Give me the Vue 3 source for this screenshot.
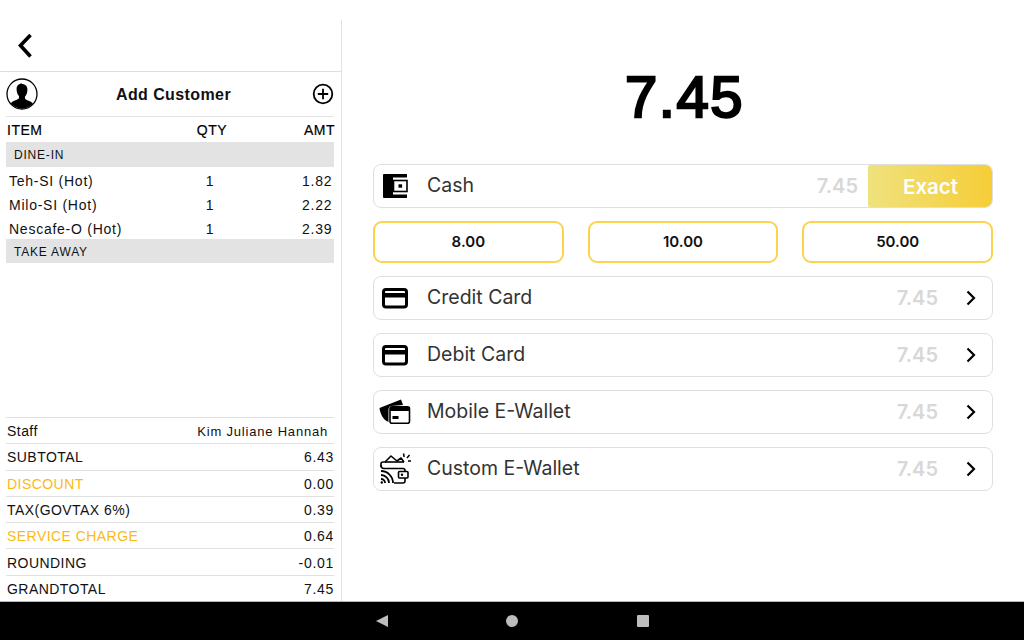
<template>
  <div class="screen">
    <div class="main">
      <aside class="left">
        <div class="back-row">
          <svg class="back-icon" width="20" height="28" viewBox="0 0 20 28">
            <path d="M16.500 3 L6.500 13.500 L16.500 24.500" fill="none" stroke="#000" stroke-width="3.600" />
          </svg>
        </div>
        <div class="customer-row">
          <svg width="32" height="32" viewBox="0 0 32 32">
            <defs>
              <clipPath id="avatarClip"><circle cx="16" cy="16" r="14.600" /></clipPath>
            </defs>
            <circle cx="16" cy="16" r="15" fill="#fff" stroke="#000" stroke-width="1.300" />
            <g clip-path="url(#avatarClip)">
              <path d="M16 5.500c-3.600 0-5.600 2.600-5.400 6 .1 2.600.9 5 2.300 6.500.4.9.2 2-.4 2.700-1.800 1.400-5.600 1.900-7.500 4.300L4 32h24l-1-6.500c-1.900-2.400-5.700-2.900-7.500-4.300-.6-.7-.8-1.800-.4-2.700 1.400-1.500 2.200-3.900 2.300-6.500.2-3.400-1.800-6-5.400-6z" fill="#000" />
            </g>
          </svg>
          <span class="customer-label">Add Customer</span>
          <svg width="22" height="22" viewBox="0 0 22 22">
            <circle cx="11" cy="11" r="9.300" fill="none" stroke="#000" stroke-width="1.800" />
            <path d="M11 5.800v10.400M5.800 11h10.400" stroke="#000" stroke-width="1.800" />
          </svg>
        </div>
        <div class="order-head">
          <span class="c-name">ITEM</span>
          <span class="c-qty">QTY</span>
          <span class="c-amt">AMT</span>
        </div>
        <div class="group dine">DINE-IN</div>
        <div v-for="item in items" :key="item.name" class="order-row">
          <span class="c-name">{{ item.name }}</span>
          <span class="c-qty">1</span>
          <span class="c-amt">{{ item.amt }}</span>
        </div>
        <div class="group take">TAKE AWAY</div>
        <div class="spacer"></div>
        <div class="summary">
          <div class="sum-row staff">
            <span>Staff</span>
            <span class="staff-name">Kim Juliane Hannah</span>
          </div>
          <div v-for="row in summary" :key="row.label" class="sum-row">
            <span :class="{ accent: row.accent }">{{ row.label }}</span>
            <span class="sum-val">{{ row.value }}</span>
          </div>
        </div>
      </aside>

      <section class="right">
        <div class="total">7.45</div>

        <div class="pay-row cash">
          <svg class="pay-icon" width="28" height="26" viewBox="0 0 28 26">
            <path d="M3 1H26V4.500H12V21.500H26V25H3a1 1 0 0 1-1-1V2a1 1 0 0 1 1-1z" fill="#000" />
            <rect x="12.500" y="7.500" width="13.500" height="11" fill="#fff" stroke="#000" stroke-width="1.600" />
            <rect x="17.500" y="11.300" width="3.600" height="3.400" fill="#000" />
          </svg>
          <span class="pay-label">Cash</span>
          <span class="pay-amt">7.45</span>
          <span class="exact">Exact</span>
        </div>

        <div class="quick">
          <button v-for="q in quick" :key="q" class="quick-btn">{{ q }}</button>
        </div>

        <div v-for="m in methods" :key="m.label" class="pay-row">
          <svg v-if="m.icon === 'card'" class="pay-icon" width="28" height="26" viewBox="0 0 28 26">
            <rect x="2.500" y="4.500" width="23" height="17.500" rx="2.500" fill="none" stroke="#000" stroke-width="3" />
            <rect x="2" y="8" width="24" height="4.500" fill="#000" />
          </svg>
          <svg v-else-if="m.icon === 'mobile'" class="pay-icon mobile" width="34" height="28" viewBox="0 0 34 28">
            <path d="M1.500 10 23 1.500 25 7 13 8q-2.500.5-2.500 3v13C5 22 2 15 1.500 10z" fill="#000" />
            <rect x="12" y="8.800" width="19.500" height="16.400" rx="2" fill="#fff" stroke="#000" stroke-width="1.600" />
            <rect x="12" y="9" width="19.500" height="4" fill="#000" />
            <rect x="14.500" y="18" width="6" height="3" fill="#000" />
          </svg>
          <svg v-else class="pay-icon custom" width="34" height="34" viewBox="0 0 34 34">
            <path d="M2 15v-3q0-2 2-2h2l6-6 6 5 4-3 3 4" fill="none" stroke="#000" stroke-width="1.600" stroke-linejoin="round" />
            <path d="M6 10h19" stroke="#000" stroke-width="1.600" />
            <path d="M2 13q0 3.500 3 3.500h19q2 0 2 2V20" fill="none" stroke="#000" stroke-width="1.600" />
            <path d="M26 26v3q0 2-2 2h-9" fill="none" stroke="#000" stroke-width="1.600" />
            <rect x="19.500" y="19.500" width="9.500" height="6.500" rx="1" fill="#fff" stroke="#000" stroke-width="1.600" />
            <circle cx="23" cy="22.800" r="1.200" fill="#000" />
            <path d="M24.500 1.500l.7 3.500M30.500 3l-2.500 3M32 9h-3" stroke="#000" stroke-width="1.500" />
            <path d="M2 27a4 4 0 0 1 4 4M2 23a8 8 0 0 1 8 8M2 19a12 12 0 0 1 12 12" fill="none" stroke="#000" stroke-width="1.800" />
            <circle cx="2.800" cy="30.500" r="1.200" fill="#000" />
          </svg>
          <span class="pay-label">{{ m.label }}</span>
          <span class="pay-amt">7.45</span>
          <svg class="chevron" width="12" height="16" viewBox="0 0 12 16">
            <path d="M2.500 1.500 9 8l-6.500 6.500" fill="none" stroke="#000" stroke-width="2.200" />
          </svg>
        </div>
      </section>
    </div>

    <nav class="navbar">
      <span class="nav-tri"></span>
      <span class="nav-dot"></span>
      <span class="nav-sq"></span>
    </nav>
  </div>
</template>

<script setup>
const items = [
  { name: 'Teh-SI (Hot)', amt: '1.82' },
  { name: 'Milo-SI (Hot)', amt: '2.22' },
  { name: 'Nescafe-O (Hot)', amt: '2.39' },
]

const summary = [
  { label: 'SUBTOTAL', value: '6.43' },
  { label: 'DISCOUNT', value: '0.00', accent: true },
  { label: 'TAX(GOVTAX 6%)', value: '0.39' },
  { label: 'SERVICE CHARGE', value: '0.64', accent: true },
  { label: 'ROUNDING', value: '-0.01' },
  { label: 'GRANDTOTAL', value: '7.45' },
]

const quick = ['8.00', '10.00', '50.00']

const methods = [
  { label: 'Credit Card', icon: 'card' },
  { label: 'Debit Card', icon: 'card' },
  { label: 'Mobile E-Wallet', icon: 'mobile' },
  { label: 'Custom E-Wallet', icon: 'custom' },
]
</script>

<style>
html, body { margin: 0; background: #fff; }
</style>

<style scoped>
.screen {
  width: 1024px; height: 640px;
  display: flex; flex-direction: column;
  font-family: "Liberation Sans", Arial, sans-serif;
  color: #000;
  overflow: hidden;
}
.main { flex: 1; display: flex; min-height: 0; padding-top: 20px; }

.left {
  width: 341px;
  border-right: 1px solid #e2e2e2;
  display: flex; flex-direction: column;
}
.back-row {
  height: 51px;
  border-bottom: 1px solid #dedede;
  display: flex; align-items: center;
  padding-left: 14px;
}
.customer-row {
  height: 44px; margin: 0 7px 0 6px;
  border-bottom: 1px solid #e2e2e2;
  display: flex; align-items: center; justify-content: space-between;
}
.customer-label {
  font-size: 16px; font-weight: 700; margin-right: 3px; padding-top: 1px;
  color: #111; letter-spacing: .4px;
}

.order-head, .order-row {
  display: flex; align-items: center;
  margin: 0 7px 0 6px; font-size: 14px;
  box-sizing: border-box;
}
.order-head { height: 25px; padding-top: 1px; letter-spacing: .5px; -webkit-text-stroke: .2px #000; }
.order-row { height: 24px; padding: 0 2px 1px 3px; letter-spacing: .75px; color: #111; }
.c-name { flex: 1; white-space: nowrap; }
.c-qty { width: 60px; text-align: center; margin-right: 62px; }
.c-amt { width: 30px; text-align: right; white-space: nowrap; }
.order-head .c-name { padding-left: 1px; }

.group {
  height: 25px; margin: 0 7px 0 6px;
  background: #e3e3e3;
  box-sizing: border-box;
  display: flex; align-items: center;
  padding: 1px 0 0 8px;
  font-size: 12px; letter-spacing: .8px; color: #111;
}
.group.dine { margin-bottom: 2px; }
.group.take { height: 24px; margin-top: -2px; }
.spacer { flex: 1; }

.summary { margin: 0 7px 0 6px; }
.sum-row {
  height: 26.300px; box-sizing: border-box;
  border-top: 1px solid #e0e0e0;
  padding: 1px 0 0 1px;
  display: flex; align-items: center; justify-content: space-between;
  font-size: 14px; letter-spacing: .45px; color: #111;
}
.sum-val { letter-spacing: .7px; }
.accent { color: #fdb913; }
.staff-name { font-size: 13px; margin-right: 6px; letter-spacing: .8px; }

.right {
  flex: 1;
  padding: 0 31px;
  display: flex; flex-direction: column;
}
.total {
  height: 144px; box-sizing: border-box;
  padding: 9px 0 0 3px;
  display: flex; align-items: center; justify-content: center;
  font-size: 58px; font-weight: 400;
  -webkit-text-stroke: 2.400px #000;
  letter-spacing: 1.500px;
}
.pay-row {
  height: 44px; box-sizing: border-box;
  border: 1px solid #dfdfdf; border-radius: 8px;
  display: flex; align-items: center;
  margin-bottom: 13px;
  font-family: Inter, "Open Sans", sans-serif;
  position: relative;
}
.pay-icon { position: absolute; left: 7px; top: 50%; transform: translateY(-50%); }
.pay-icon.mobile { left: 4px; }
.pay-icon.custom { left: 5px; }
.pay-label { margin-left: 53px; padding-bottom: 2px; font-size: 19.500px; color: #333; flex: 1; }
.pay-amt { font-size: 20px; font-weight: 600; color: #d8d8d8; margin-right: 27px; }
.chevron { margin-right: 15px; }
.cash { overflow: hidden; }
.cash .pay-amt { margin-right: 10px; }
.exact {
  width: 125px; align-self: stretch;
  margin: -1px -1px -1px 0;
  background: linear-gradient(90deg, #efe27d, #f6cd36);
  border-radius: 4px 8px 8px 4px;
  color: #fff; font-size: 20.500px; font-weight: 600;
  display: flex; align-items: center; justify-content: center;
}
.quick { display: flex; gap: 24px; margin-bottom: 13px; }
.quick-btn {
  flex: 1; height: 42px;
  background: #fff;
  border: 2px solid #fbd34e; border-radius: 9px;
  padding: 0 0 2px;
  font-family: Inter, sans-serif; font-size: 15px; font-weight: 600;
  color: #111;
}

.navbar {
  height: 39px; background: #000;
  border-top: 1px solid #b8b8b8; box-sizing: border-box;
  display: flex; align-items: center; justify-content: center;
  gap: 118.500px;
}
.nav-tri {
  width: 0; height: 0;
  border-top: 6.500px solid transparent;
  border-bottom: 6.500px solid transparent;
  border-right: 12px solid #bdbdbd;
}
.nav-dot { width: 12px; height: 12px; border-radius: 50%; background: #bdbdbd; }
.nav-sq { width: 12px; height: 12px; border-radius: 1px; background: #bdbdbd; }
</style>
